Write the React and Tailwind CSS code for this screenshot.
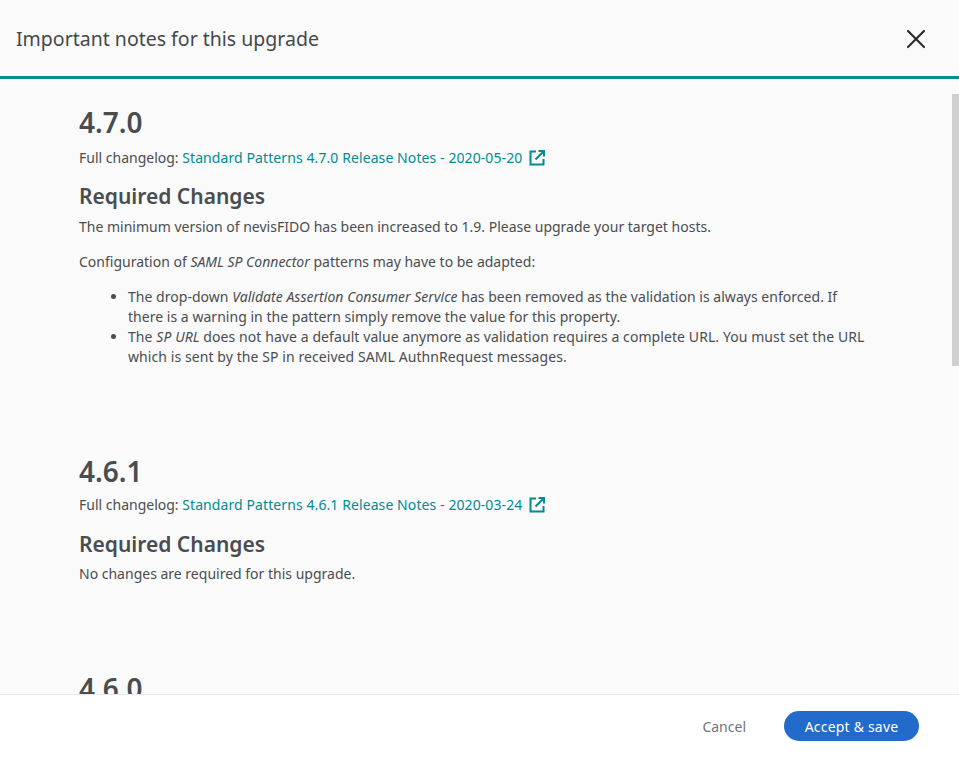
import React from 'react';
import { X } from 'lucide-react';

const LinkIcon = () => (
  <svg viewBox="0 0 18 18" className="w-[18px] h-[18px] ml-[6px] text-[#008c90]" fill="none" stroke="currentColor" strokeWidth="2">
    <path d="M8 2.5H2.5v13h13V10" />
    <path d="M7.5 10.5L15.5 2.5M10.5 2h5.5v5.5" />
  </svg>
);

const Changelog = ({ version, date, className }) => (
  <p className={`text-[14px] leading-[20px] flex items-center ${className}`}>
    <span>Full changelog:&nbsp;</span>
    <a className="text-[#008c90] tracking-[0.09px]">Standard Patterns {version} Release Notes - {date}</a>
    <LinkIcon />
  </p>
);

export default function App() {
  return (
    <div className="h-[757px] w-[959px] flex flex-col bg-white text-[#4a4d50] overflow-hidden" style={{ fontFamily: '"Noto Sans", sans-serif' }}>
      {/* Header */}
      <div className="h-[79px] shrink-0 bg-[#fafafa] border-b-[3px] border-[#008c90] flex items-center justify-between pl-[16px] pr-[27px] pt-[2px]">
        <h1 className="text-[19.5px] text-[#45484b]">Important notes for this upgrade</h1>
        <X className="w-[32px] h-[32px] text-[#2b2d30]" strokeWidth={1.6} />
      </div>

      {/* Body */}
      <div className="relative flex-1 min-h-0 bg-[#fafafa] overflow-hidden pl-[79px] pr-[90px] pt-[23px]">
        <div className="absolute right-0 top-[15px] w-[7px] h-[272px] bg-[#d0d0d0]" />

        <h2 className="text-[28px] leading-[40px] font-semibold">4.7.0</h2>
        <Changelog version="4.7.0" date="2020-05-20" className="mt-[6px]" />
        <h3 className="text-[21px] leading-[30px] font-semibold mt-[13px]">Required Changes</h3>
        <p className="text-[14px] leading-[20px] mt-[6px]">The minimum version of nevisFIDO has been increased to 1.9. Please upgrade your target hosts.</p>
        <p className="text-[14px] leading-[20px] mt-[15px]">Configuration of <em>SAML SP Connector</em> patterns may have to be adapted:</p>
        <ul className="list-disc text-[14px] leading-[20px] mt-[15px] pl-[49px]">
          <li className="tracking-[0.03px]">The drop-down <em>Validate Assertion Consumer Service</em> has been removed as the validation is always enforced. If there is a warning in the pattern simply remove the value for this property.</li>
          <li className="tracking-[0.08px]">The <em>SP URL</em> does not have a default value anymore as validation requires a complete URL. You must set the URL which is sent by the SP in received SAML AuthnRequest messages.</li>
        </ul>

        <h2 className="text-[28px] leading-[40px] font-semibold mt-[84px]">4.6.1</h2>
        <Changelog version="4.6.1" date="2020-03-24" className="mt-[4px]" />
        <h3 className="text-[21px] leading-[30px] font-semibold mt-[14px]">Required Changes</h3>
        <p className="text-[14px] leading-[20px] mt-[5px]">No changes are required for this upgrade.</p>

        <h2 className="text-[28px] leading-[40px] font-semibold mt-[84px]">4.6.0</h2>
      </div>

      {/* Footer */}
      <div className="h-[63px] shrink-0 bg-white border-t border-[#e8e8e8] flex items-center justify-end pr-[40px]">
        <button className="text-[14px] text-[#6f7479] mr-[38px]">Cancel</button>
        <button className="h-[30px] w-[135px] rounded-full bg-[#236bcb] text-white text-[14px] tracking-[0.2px]">Accept &amp; save</button>
      </div>
    </div>
  );
}
